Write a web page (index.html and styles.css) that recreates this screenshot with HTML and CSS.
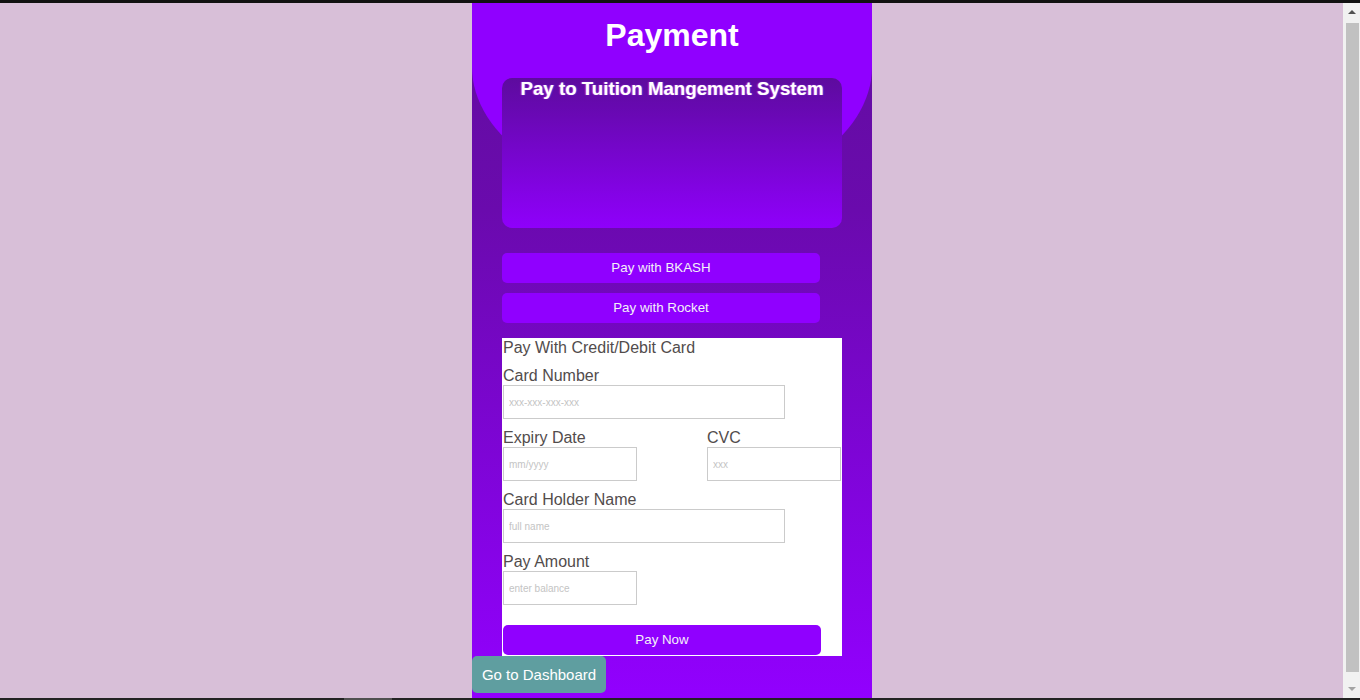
FILE: index.html
```html
<!DOCTYPE html>
<html lang="en">
<head>
<meta charset="utf-8">
<title>Payment</title>
<link rel="stylesheet" href="styles.css">
</head>
<body>
<div class="frame-top"></div>
<div class="frame-bottom"><span class="frame-seg"></span></div>
<div class="scrollbar" aria-hidden="true">
  <span class="arrow arrow-up"></span>
  <span class="thumb"></span>
  <span class="arrow arrow-down"></span>
</div>
<main class="container">
  <h1 class="title">Payment</h1>
  <section class="card">
    <h3 class="card-title">Pay to Tuition Mangement System</h3>
  </section>
  <div class="pay-options">
    <button class="btn">Pay with BKASH</button>
    <button class="btn">Pay with Rocket</button>
  </div>
  <form class="card-form">
    <div class="form-title">Pay With Credit/Debit Card</div>
    <label class="label">Card Number</label>
    <input class="input input-wide" type="text" placeholder="xxx-xxx-xxx-xxx">
    <div class="row">
      <div class="col">
        <label class="label">Expiry Date</label>
        <input class="input input-small" type="text" placeholder="mm/yyyy">
      </div>
      <div class="col">
        <label class="label">CVC</label>
        <input class="input input-small" type="text" placeholder="xxx">
      </div>
    </div>
    <label class="label">Card Holder Name</label>
    <input class="input input-wide" type="text" placeholder="full name">
    <label class="label">Pay Amount</label>
    <input class="input input-small" type="text" placeholder="enter balance">
    <button class="btn btn-now" type="button">Pay Now</button>
  </form>
  <button class="dash-btn">Go to Dashboard</button>
</main>
</body>
</html>
```
FILE: styles.css
```css
html, body {
  margin: 0;
  padding: 0;
}
body {
  background: #d8bfd8;
  font-family: "Liberation Sans", Arial, sans-serif;
  padding-right: 16px;
}
.frame-top {
  position: fixed;
  top: 0;
  left: 0;
  right: 0;
  height: 3px;
  background: #111;
  z-index: 10;
}
.frame-bottom {
  position: fixed;
  bottom: 0;
  left: 0;
  right: 0;
  height: 2px;
  background: #232323;
  z-index: 10;
}
.frame-seg {
  position: absolute;
  left: 344px;
  width: 48px;
  top: 0;
  bottom: 0;
  background: #505050;
}
.scrollbar {
  position: fixed;
  top: 3px;
  bottom: 2px;
  right: 0;
  width: 17px;
  background: #f1f1f1;
  z-index: 9;
  display: flex;
  flex-direction: column;
  align-items: center;
}
.arrow {
  width: 0;
  height: 0;
  border-left: 4px solid transparent;
  border-right: 4px solid transparent;
}
.arrow-up {
  margin-top: 7px;
  border-bottom: 4px solid #505050;
}
.arrow-down {
  margin-bottom: 7px;
  border-top: 4px solid #a3a3a3;
}
.thumb {
  width: 13px;
  margin: 9px 0 0 2px;
  flex: 1;
  background: #c1c1c1;
  margin-bottom: 15px;
}
.container {
  position: relative;
  width: 400px;
  min-height: 700px;
  margin: 0 auto;
  background: linear-gradient(to bottom, #610e9f 0%, #6a0aad 30%, #9200ff 100%);
  overflow: hidden;
  display: flex;
  flex-direction: column;
  align-items: flex-start;
}
.container::before {
  content: "";
  position: absolute;
  left: 0;
  top: 0;
  width: 400px;
  height: 197px;
  border-radius: 0 0 200px 200px / 0 0 130px 130px;
  background: #9000ff;
}
.title {
  position: relative;
  align-self: stretch;
  margin: 17px 0 0;
  height: 37px;
  line-height: 37px;
  font-size: 32px;
  font-weight: bold;
  color: #fff;
  text-align: center;
}
.card {
  position: relative;
  margin: 24px 0 0 30px;
  width: 340px;
  height: 150px;
  border-radius: 10px;
  background: linear-gradient(to bottom, #5d0b9e, #8f00fb);
}
.card-title {
  margin: 0;
  line-height: 21px;
  font-size: 18.72px;
  font-weight: bold;
  color: #fff;
  text-align: center;
  text-shadow: -1px 0 1px rgba(255, 80, 200, 0.6), 1px 0 1px rgba(60, 120, 255, 0.6);
}
.pay-options {
  position: relative;
  margin: 25px 0 0 30px;
  display: flex;
  flex-direction: column;
  gap: 10px;
}
.btn {
  width: 318px;
  height: 30px;
  border: none;
  border-radius: 5px;
  background: #9000ff;
  color: #f4f0f8;
  font-family: "Liberation Sans", Arial, sans-serif;
  font-size: 13.33px;
  padding: 0 0 2px;
}
.card-form {
  position: relative;
  margin: 15px 0 0 30px;
  width: 340px;
  background: #fff;
  display: flex;
  flex-direction: column;
  align-items: flex-start;
  padding: 0 1px 1px 1px;
  box-sizing: border-box;
  color: #524c4c;
  font-size: 16px;
}
.form-title {
  line-height: 19px;
  height: 19px;
}
.label {
  display: block;
  margin-top: 10px;
  line-height: 18px;
  height: 18px;
}
.input {
  box-sizing: border-box;
  height: 34px;
  border: 1px solid #cbcbcb;
  padding: 0 5px;
  font-family: "Liberation Sans", Arial, sans-serif;
  font-size: 10px;
  margin: 0;
  outline: none;
}
.input::placeholder {
  color: #c4c4c4;
}
.input-wide {
  width: 282px;
}
.input-small {
  width: 134px;
}
.row {
  align-self: stretch;
  display: flex;
  justify-content: space-between;
}
.col {
  display: flex;
  flex-direction: column;
  align-items: flex-start;
}
.btn-now {
  margin-top: 20px;
}
.dash-btn {
  position: relative;
  margin: 0;
  width: 134px;
  height: 37px;
  border: none;
  border-radius: 5px;
  background: #5f9ea0;
  color: #fff;
  font-family: "Liberation Sans", Arial, sans-serif;
  font-size: 15px;
  padding: 0;
}
```
